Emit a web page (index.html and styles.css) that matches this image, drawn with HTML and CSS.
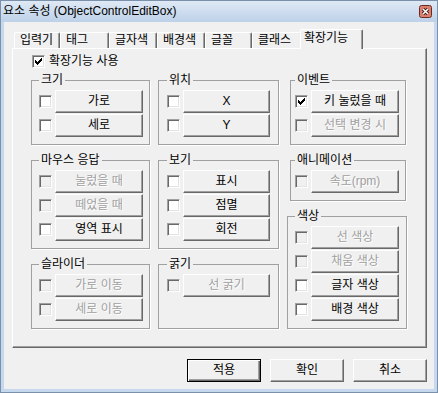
FILE: index.html
```html
<!DOCTYPE html>
<html lang="ko">
<head>
    <meta charset="UTF-8">
    <meta name="viewport" content="width=device-width, initial-scale=1.0">
    <title>요소 속성</title>
    <link rel="stylesheet" href="styles.css">
</head>
<body>

    <div class="window">
        <div class="titlebar">
            <span class="title">요소 속성 (ObjectControlEditBox)</span>
            <span class="close">
                <svg width="13" height="13" viewBox="0 0 13 13">
                    <rect x="0.5" y="0.5" width="12" height="12" rx="2" fill="#d9806f" stroke="#6e2a22"/>
                    <path d="M4 4l5 5M9 4l-5 5" stroke="#4a1a14" stroke-width="3.2"/>
                    <path d="M4 4l5 5M9 4l-5 5" stroke="#fff" stroke-width="1.6"/>
                </svg>
            </span>
        </div>

        <div class="client">
            <div class="tabs">
                <div class="tab">입력기</div>
                <div class="tab">태그</div>
                <div class="tab">글자색</div>
                <div class="tab">배경색</div>
                <div class="tab">글꼴</div>
                <div class="tab">클래스</div>
                <div class="tab active">확장기능</div>
            </div>

            <div class="panel">
                <div class="check-row">
                    <span class="chk"><svg width="7" height="7" viewBox="0 0 7 7"><path d="M0 2h1v3H0zM1 3h1v3H1zM2 4h1v3H2zM3 3h1v3H3zM4 2h1v3H4zM5 1h1v3H5zM6 0h1v3H6z"/></svg></span>
                    확장기능 사용
                </div>

                <div class="columns">
                    <!-- 왼쪽 열 -->
                    <div class="col col1">
                        <fieldset class="group">
                            <legend>크기</legend>
                            <div class="rows">
                                <div class="row"><span class="chk"></span><button class="btn">가로</button></div>
                                <div class="row"><span class="chk"></span><button class="btn">세로</button></div>
                            </div>
                        </fieldset>
                        <fieldset class="group">
                            <legend>마우스 응답</legend>
                            <div class="rows">
                                <div class="row"><span class="chk off"></span><button class="btn" disabled>눌렀을 때</button></div>
                                <div class="row"><span class="chk off"></span><button class="btn" disabled>떼었을 때</button></div>
                                <div class="row"><span class="chk"></span><button class="btn">영역 표시</button></div>
                            </div>
                        </fieldset>
                        <fieldset class="group">
                            <legend>슬라이더</legend>
                            <div class="rows">
                                <div class="row"><span class="chk off"></span><button class="btn" disabled>가로 이동</button></div>
                                <div class="row"><span class="chk off"></span><button class="btn" disabled>세로 이동</button></div>
                            </div>
                        </fieldset>
                    </div>

                    <!-- 가운데 열 -->
                    <div class="col col2">
                        <fieldset class="group">
                            <legend>위치</legend>
                            <div class="rows">
                                <div class="row"><span class="chk"></span><button class="btn">X</button></div>
                                <div class="row"><span class="chk"></span><button class="btn">Y</button></div>
                            </div>
                        </fieldset>
                        <fieldset class="group">
                            <legend>보기</legend>
                            <div class="rows">
                                <div class="row"><span class="chk"></span><button class="btn">표시</button></div>
                                <div class="row"><span class="chk"></span><button class="btn">점멸</button></div>
                                <div class="row"><span class="chk"></span><button class="btn">회전</button></div>
                            </div>
                        </fieldset>
                        <fieldset class="group fill">
                            <legend>굵기</legend>
                            <div class="rows">
                                <div class="row"><span class="chk off"></span><button class="btn" disabled>선 굵기</button></div>
                            </div>
                        </fieldset>
                    </div>

                    <!-- 오른쪽 열 -->
                    <div class="col col3">
                        <fieldset class="group">
                            <legend>이벤트</legend>
                            <div class="rows">
                                <div class="row">
                                    <span class="chk"><svg width="7" height="7" viewBox="0 0 7 7"><path d="M0 2h1v3H0zM1 3h1v3H1zM2 4h1v3H2zM3 3h1v3H3zM4 2h1v3H4zM5 1h1v3H5zM6 0h1v3H6z"/></svg></span>
                                    <button class="btn">키 눌렀을 때</button>
                                </div>
                                <div class="row"><span class="chk off"></span><button class="btn" disabled>선택 변경 시</button></div>
                            </div>
                        </fieldset>
                        <fieldset class="group">
                            <legend>애니메이션</legend>
                            <div class="rows">
                                <div class="row"><span class="chk off"></span><button class="btn" disabled>속도(rpm)</button></div>
                            </div>
                        </fieldset>
                        <fieldset class="group colors">
                            <legend>색상</legend>
                            <div class="rows">
                                <div class="row"><span class="chk off"></span><button class="btn" disabled>선 색상</button></div>
                                <div class="row"><span class="chk off"></span><button class="btn" disabled>채움 색상</button></div>
                                <div class="row"><span class="chk"></span><button class="btn">글자 색상</button></div>
                                <div class="row"><span class="chk"></span><button class="btn">배경 색상</button></div>
                            </div>
                        </fieldset>
                    </div>
                </div>
            </div>

            <div class="footer">
                <button class="btn default">적용</button>
                <button class="btn">확인</button>
                <button class="btn">취소</button>
            </div>
        </div>
    </div>

</body>
</html>
```

FILE: styles.css
```css
body {
    margin: 0;
    background: #fff;
    font-family: "Liberation Sans", "Noto Sans CJK KR", sans-serif;
    font-size: 12px;
    color: #000;
}
.window {
    width: 438px;
    height: 393px;
    box-sizing: border-box;
    border: 1px solid #7b91ab;
    background: #c5d8ee;
    padding: 0 3px 3px;
    display: flex;
    flex-direction: column;
}
.titlebar {
    height: 21px;
    margin: 0 -3px;
    padding: 0 5px 0 2px;
    display: flex;
    align-items: center;
    justify-content: space-between;
    background: linear-gradient(#dfe9f5, #bdd1e9);
}
.title {
    line-height: 21px;
}
.close svg {
    display: block;
}
.client {
    flex: 1;
    background: #f0f0f0;
    padding: 7px 7px 0 8px;
}

/* pestañas */
.tabs {
    display: flex;
    align-items: flex-end;
    height: 19px;
    padding-left: 2px;
}
.tab {
    box-sizing: border-box;
    width: 48px;
    height: 16px;
    padding-left: 5px;
    border: 1px solid #fff;
    border-bottom: 0;
    border-right-color: #696969;
    border-radius: 2px 2px 0 0;
    box-shadow: inset -1px 0 0 #a0a0a0;
    line-height: 15px;
    white-space: nowrap;
}
.tab:nth-child(1) { width: 46px; }
.tab:nth-child(2) { width: 49px; }
.tab:nth-child(5) { width: 47px; }
.tab:nth-child(6) { width: 50px; }
.tab.active {
    position: relative;
    width: 63px;
    height: 20px;
    margin: 0 0 -1px -2px;
    padding-left: 3px;
    background: #f0f0f0;
    line-height: 17px;
}

.panel {
    border: 1px solid;
    border-color: #fff #696969 #696969 #fff;
    box-shadow: inset -1px -1px 0 #a0a0a0;
    padding: 6px 0 18px 18px;
}
.check-row {
    display: flex;
    align-items: center;
    gap: 4px;
    height: 13px;
    line-height: 13px;
    margin-left: 1px;
}
.columns {
    display: flex;
    gap: 8px;
    margin-top: 6px;
}
.col {
    display: flex;
    flex-direction: column;
    gap: 9px;
}
.col1 { width: 119px; }
.col2 { width: 121px; }
.col3 { width: 120px; }

.group {
    margin: 0;
    padding: 3px 6px 7px 7px;
    border: 1px solid #a0a0a0;
    box-shadow: 1px 1px 0 #fff;
    min-width: 0;
}
.group legend {
    padding: 0 2px;
    height: 13px;
    line-height: 13px;
    white-space: nowrap;
}
.col2 .group {
    padding: 3px 8px 7px 8px;
}
.col2 .group.fill {
    flex: 1;
}
.col3 .group {
    margin: 0 1px 0 3px;
    padding: 3px 6px 7px 4px;
}
.col3 .group.colors {
    margin: 0;
    padding: 3px 7px 7px 7px;
}
.rows {
    display: flex;
    flex-direction: column;
    gap: 1px;
}
.row {
    display: flex;
    align-items: center;
    gap: 3px;
    height: 23px;
}

/* casillas */
.chk {
    flex: none;
    width: 13px;
    height: 13px;
    box-sizing: border-box;
    border: 1px solid;
    border-color: #a0a0a0 #fff #fff #a0a0a0;
    box-shadow: inset 1px 1px 0 #696969, inset -1px -1px 0 #e3e3e3;
    background: #fff;
}
.chk.off {
    background: #f0f0f0;
}
.chk svg {
    display: block;
    margin: 2px;
    shape-rendering: crispEdges;
}

/* botones */
.btn {
    flex: 1;
    min-width: 0;
    height: 23px;
    box-sizing: border-box;
    padding: 0;
    font: inherit;
    line-height: 21px;
    color: #000;
    background: #f0f0f0;
    border: 1px solid;
    border-color: #fff #696969 #696969 #fff;
    border-radius: 0;
    box-shadow: inset -1px -1px 0 #a0a0a0;
    white-space: nowrap;
}
.btn:disabled {
    color: #a0a0a0;
    text-shadow: 1px 1px 0 #fff;
}
.btn.default {
    border-color: #000;
    box-shadow: inset 1px 1px 0 #fff, inset -1px -1px 0 #696969, inset -2px -2px 0 #a0a0a0;
}
.footer {
    display: flex;
    justify-content: flex-end;
    gap: 9px;
    margin-top: 11px;
}
.footer .btn {
    flex: none;
    width: 74px;
}
```
